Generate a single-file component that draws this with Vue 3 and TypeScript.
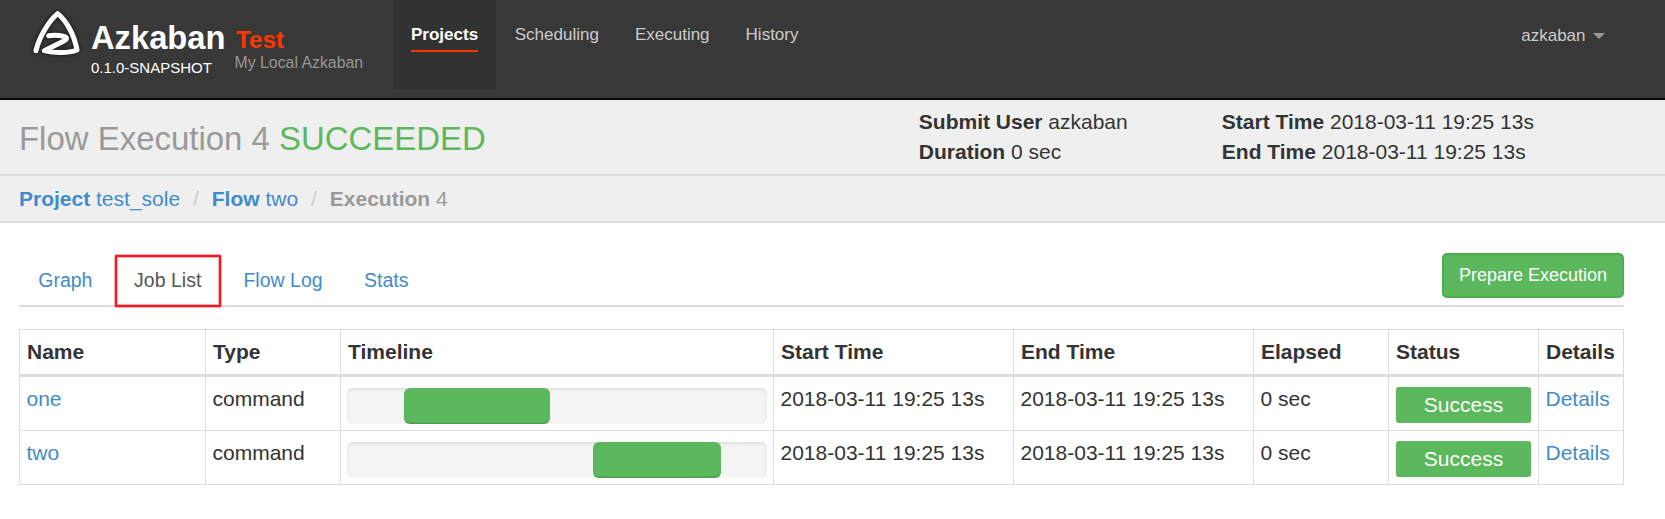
<script setup lang="ts">
interface Job {
  name: string
  type: string
  offset: number
  width: number
  start: string
  end: string
  elapsed: string
  status: string
}

const navItems = ['Projects', 'Scheduling', 'Executing', 'History']
const tabs = ['Graph', 'Job List', 'Flow Log', 'Stats']
const columns = ['Name', 'Type', 'Timeline', 'Start Time', 'End Time', 'Elapsed', 'Status', 'Details']
const stamp = '2018-03-11 19:25 13s'

// offset and width are pixels inside the 420px timeline track
const jobs: Job[] = [
  { name: 'one', type: 'command', offset: 57, width: 146, start: stamp, end: stamp, elapsed: '0 sec', status: 'Success' },
  { name: 'two', type: 'command', offset: 246, width: 128, start: stamp, end: stamp, elapsed: '0 sec', status: 'Success' },
]
</script>

<template>
  <div class="page">
    <header class="navbar">
      <svg class="logo" viewBox="0 0 195 180" width="65" height="60">
        <path
          d="M33 137 C42 97 72 47 98 26 C124 47 148 89 156 135 C130 145 88 145 58 137 L118 107 C127 102 127 97 117 94 C103 91 86 90 71 92"
        />
      </svg>
      <div class="brand">
        <div class="brand-name">Azkaban</div>
        <div class="version">0.1.0-SNAPSHOT</div>
      </div>
      <div class="instance">
        <div class="label">Test</div>
        <div class="slogan">My Local Azkaban</div>
      </div>
      <nav class="menu">
        <a v-for="(item, i) in navItems" :key="item" class="menu-item" :class="{ active: i === 0 }">
          <span>{{ item }}</span>
        </a>
      </nav>
      <div class="user">azkaban<i class="caret"></i></div>
    </header>

    <section class="summary">
      <h1>Flow Execution 4 <span class="ok">SUCCEEDED</span></h1>
      <div class="facts user-facts">
        <p><b>Submit User</b> azkaban</p>
        <p><b>Duration</b> 0 sec</p>
      </div>
      <div class="facts">
        <p><b>Start Time</b> {{ stamp }}</p>
        <p><b>End Time</b> {{ stamp }}</p>
      </div>
    </section>

    <div class="breadcrumb">
      <a><b>Project</b> test_sole</a>
      <i>/</i>
      <a><b>Flow</b> two</a>
      <i>/</i>
      <span><b>Execution</b> 4</span>
    </div>

    <main>
      <div class="tabs">
        <a v-for="tab in tabs" :key="tab" class="tab" :class="{ current: tab === 'Job List' }">{{ tab }}</a>
        <button class="prepare">Prepare Execution</button>
      </div>

      <table>
        <colgroup>
          <col class="c-name" /><col class="c-type" /><col class="c-timeline" /><col class="c-time" />
          <col class="c-time" /><col class="c-elapsed" /><col class="c-status" /><col class="c-details" />
        </colgroup>
        <thead>
          <tr>
            <th v-for="c in columns" :key="c">{{ c }}</th>
          </tr>
        </thead>
        <tbody>
          <tr v-for="job in jobs" :key="job.name">
            <td><a>{{ job.name }}</a></td>
            <td>{{ job.type }}</td>
            <td class="timeline">
              <div class="track">
                <div class="bar" :style="{ marginLeft: job.offset + 'px', width: job.width + 'px' }"></div>
              </div>
            </td>
            <td>{{ job.start }}</td>
            <td>{{ job.end }}</td>
            <td>{{ job.elapsed }}</td>
            <td class="status"><div class="badge">{{ job.status }}</div></td>
            <td><a>Details</a></td>
          </tr>
        </tbody>
      </table>
    </main>
  </div>
</template>

<style>
body {
  margin: 0;
  background: #fff;
}
</style>

<style scoped>
.page {
  height: 519px;
  overflow: hidden;
  font-family: "Liberation Sans", Arial, sans-serif;
  font-size: 21px;
  line-height: 30px;
  color: #333;
  white-space: nowrap;
}
.page * {
  box-sizing: border-box;
}
a {
  color: #428bca;
}
p {
  margin: 0;
}
.navbar {
  display: flex;
  align-items: flex-start;
  height: 100px;
  padding-left: 25px;
  background: #383838;
  border-bottom: 2px solid #080808;
}
.logo {
  margin-top: 5px;
  flex: none;
  filter: drop-shadow(0 0 2px rgba(0, 0, 0, 0.7));
}
.logo path {
  fill: none;
  stroke: #fff;
  stroke-width: 15;
  stroke-linecap: round;
  stroke-linejoin: round;
}
.brand {
  width: 145px;
  padding: 20px 0 0 1px;
  color: #fff;
}
.brand-name {
  font-size: 32.7px;
  font-weight: bold;
  line-height: 36px;
}
.version {
  margin-top: 2px;
  font-size: 15px;
  line-height: 20px;
}
.instance {
  width: 158px;
  padding-top: 26px;
}
.label {
  padding-left: 1px;
  font-size: 24.3px;
  font-weight: bold;
  line-height: 27px;
  color: #ff3601;
}
.slogan {
  margin-left: -0.5px;
  font-size: 15.85px;
  line-height: 20px;
  color: #999;
}
.menu {
  display: flex;
  font-size: 17px;
  line-height: 24px;
}
.menu-item {
  height: 89px;
  padding: 23px 18px 0;
  color: #ccc;
}
.menu-item span {
  display: block;
}
.menu-item.active {
  margin-right: 0.7px;
  background: #323232;
  color: #fff;
  font-weight: bold;
}
.menu-item.active span {
  height: 29px;
  border-bottom: 2px solid #ff3601;
}
.user {
  display: flex;
  align-items: center;
  margin: 24px 60px 0 auto;
  font-size: 17px;
  line-height: 24px;
  color: #ccc;
}
.caret {
  margin: 0 0 0 7.5px;
  border: 6px solid transparent;
  border-top-color: #999;
  border-bottom: 0;
}
.summary {
  display: flex;
  height: 76px;
  padding-left: 19px;
  background: #efefef;
  border-bottom: 2px solid #ddd;
}
h1 {
  width: 899.8px;
  margin: 19px 0 0;
  font-size: 32.95px;
  font-weight: normal;
  line-height: 40px;
  color: #999;
}
.ok {
  color: #5cb85c;
}
.facts {
  padding-top: 7px;
}
.user-facts {
  width: 303px;
}
.breadcrumb {
  display: flex;
  height: 47px;
  padding: 8px 0 0 19px;
  background: #efefef;
  border-bottom: 2px solid #ddd;
  color: #999;
}
.breadcrumb i {
  width: 31.7px;
  text-align: center;
  font-style: normal;
  color: #ccc;
}
main {
  width: 1605px;
  margin: 30px 0 0 19px;
}
.tabs {
  display: flex;
  height: 54px;
  border-bottom: 2px solid #ddd;
}
.tab {
  height: 53px;
  margin-right: 3px;
  padding: 12px 19.25px 0;
  font-size: 19.5px;
  line-height: 30px;
}
.tab.current {
  width: 106px;
  height: 52px;
  margin: 2px 3.5px 0 0;
  padding: 8px 0 0;
  border: 2px solid #ed1c24;
  box-shadow: 0 0 0 1px rgba(237, 28, 36, 0.35), inset 0 0 0 1px rgba(237, 28, 36, 0.35);
  border-radius: 1px;
  text-align: center;
  color: #555;
}
.prepare {
  width: 182px;
  height: 45px;
  margin: 0 0 0 auto;
  padding: 0;
  border: 2px solid #4cae4c;
  border-radius: 5px;
  background: #5cb85c;
  color: #fff;
  font: 18px/41px "Liberation Sans", Arial, sans-serif;
}
table {
  width: 1605px;
  margin-top: 22px;
  table-layout: fixed;
  border-collapse: separate;
  border-spacing: 0;
  border: solid #ddd;
  border-width: 1px 0 0 1px;
}
.c-name { width: 186px; }
.c-type { width: 135px; }
.c-timeline { width: 433px; }
.c-time { width: 240px; }
.c-elapsed { width: 135px; }
.c-status { width: 150px; }
.c-details { width: 85px; }
th {
  height: 47px;
  padding: 0 0 0 7px;
  text-align: left;
  border-right: 1px solid #ddd;
  border-bottom: 3px solid #ddd;
}
td {
  height: 54px;
  padding: 7px 0 0 6.5px;
  vertical-align: top;
  border-right: 1px solid #ddd;
  border-bottom: 1px solid #ddd;
}
.timeline {
  padding: 11px 6px 0;
}
.track {
  height: 36px;
  border-radius: 6px;
  background: #f4f4f4;
  box-shadow: inset 0 1.5px 3px rgba(0, 0, 0, 0.1);
}
.bar {
  height: 36px;
  border-radius: 6px;
  background: #5cb85c;
  box-shadow: inset 0 -1.5px 0 rgba(0, 0, 0, 0.15);
}
.status {
  padding: 10px 6px 0 7px;
}
.badge {
  width: 135px;
  height: 36px;
  border-radius: 3px;
  background: #5cb85c;
  color: #fff;
  text-align: center;
  line-height: 36px;
}
</style>
